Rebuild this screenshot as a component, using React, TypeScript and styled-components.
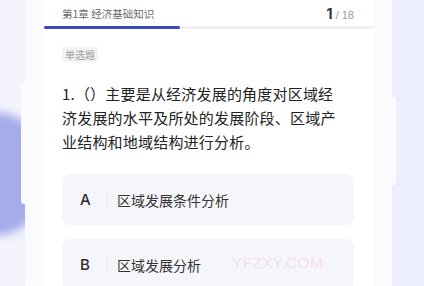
import React from "react";
import styled, { createGlobalStyle } from "styled-components";

const Global = createGlobalStyle`
  html, body { margin: 0; padding: 0; }
  body { font-family: "Noto Sans CJK SC", "Noto Sans", sans-serif; }
`;

const Page = styled.div`
  position: relative;
  width: 424px;
  height: 286px;
  overflow: hidden;
  background: linear-gradient(90deg, #f3f4fc 0%, #f1f2fc 40%, #eceffb 100%);
`;

const Blob = styled.div`
  position: absolute;
  left: -62px;
  top: 112px;
  width: 112px;
  height: 124px;
  border-radius: 50%;
  background: #a6ace9;
  filter: blur(4px);
`;

const BackCard = styled.div<{ $side: "left" | "right"; $top: number; $h: number }>`
  position: absolute;
  ${(p) => (p.$side === "left" ? "left: 21px;" : "left: 388px;")}
  top: ${(p) => p.$top}px;
  width: 8px;
  height: ${(p) => p.$h}px;
  background: #fbfbff;
  border-radius: 3px;
`;

const Card = styled.div`
  position: relative;
  margin-left: 25px;
  width: 367px;
  height: 100%;
  background: #fafbfe;
  padding: 0 19px 0 19px;
  box-sizing: border-box;
  display: flex;
  flex-direction: column;
`;

const Header = styled.div`
  height: 26px;
  flex: none;
  background: #ffffff;
  display: flex;
  align-items: center;
  justify-content: space-between;
  padding: 0 19px 0 18px;
`;

const Chapter = styled.span`
  font-size: 10.5px;
  color: #6b6b6b;
`;

const Counter = styled.span`
  display: flex;
  align-items: baseline;
  gap: 3px;
`;

const Current = styled.span`
  font-family: "Inter", "Noto Sans", sans-serif;
  font-size: 14px;
  font-weight: 700;
  color: #333;
`;

const Total = styled.span`
  font-family: "Liberation Sans", sans-serif;
  font-size: 11px;
  color: #9a9a9a;
`;

const Track = styled.div`
  height: 3px;
  flex: none;
  background: #f0f1f5;
  border-radius: 2px;
`;

const Fill = styled.div`
  height: 100%;
  background: #3a49c6;
  border-radius: 2px;
`;

const Body = styled.div`
  background: #ffffff;
  flex: 1;
  display: flex;
  flex-direction: column;
  align-items: stretch;
  padding: 18px 19px 0 18px;
`;

const Tag = styled.span`
  align-self: flex-start;
  font-size: 10px;
  line-height: 15px;
  padding: 0 3px;
  color: #9c9c9c;
  background: #f3f3f5;
  border-radius: 2px;
`;

const Question = styled.div`
  width: 281px;
  margin-top: 20px;
  font-size: 15px;
  letter-spacing: 0.2px;
  line-height: 24px;
  color: #222;
  text-spacing-trim: space-all;
`;

const Options = styled.div`
  margin-top: 20px;
  display: flex;
  flex-direction: column;
  gap: 14px;
`;

const Option = styled.div`
  height: 51px;
  background: #f5f6fa;
  border-radius: 8px;
  display: flex;
  align-items: center;
  padding-left: 18px;
`;

const Letter = styled.span`
  width: 27px;
  font-family: "Inter", "Noto Sans", sans-serif;
  font-size: 15px;
  font-weight: 500;
  color: #2b2b2b;
`;

const Divider = styled.span`
  width: 1px;
  height: 14px;
  background: #e8e9ee;
  margin-right: 9px;
`;

const OptionText = styled.span`
  font-size: 14px;
  color: #333;
`;

const Watermark = styled.div`
  position: absolute;
  left: 232px;
  top: 254px;
  font-family: "Liberation Sans", sans-serif;
  font-size: 15.5px;
  color: rgba(250, 160, 205, 0.3);
  letter-spacing: 0.3px;
  pointer-events: none;
`;

const options = [
  { key: "A", text: "区域发展条件分析" },
  { key: "B", text: "区域发展分析" },
];

export default function App() {
  const current = 1;
  const total = 18;
  return (
    <>
      <Global />
      <Page>
        <Blob />
        <BackCard $side="left" $top={82} $h={122} />
        <BackCard $side="right" $top={97} $h={88} />
        <Card>
          <Header>
            <Chapter>第1章 经济基础知识</Chapter>
            <Counter>
              <Current>{current}</Current>
              <Total>/ {total}</Total>
            </Counter>
          </Header>
          <Track>
            <Fill style={{ width: `${(136 / 329) * 100}%` }} />
          </Track>
          <Body>
            <Tag>单选题</Tag>
            <Question>
              1.（）主要是从经济发展的角度对区域经济发展的水平及所处的发展阶段、区域产业结构和地域结构进行分析。
            </Question>
            <Options>
              {options.map((o) => (
                <Option key={o.key}>
                  <Letter>{o.key}</Letter>
                  <Divider />
                  <OptionText>{o.text}</OptionText>
                </Option>
              ))}
            </Options>
          </Body>
        </Card>
        <Watermark>YFZXY.COM</Watermark>
      </Page>
    </>
  );
}
